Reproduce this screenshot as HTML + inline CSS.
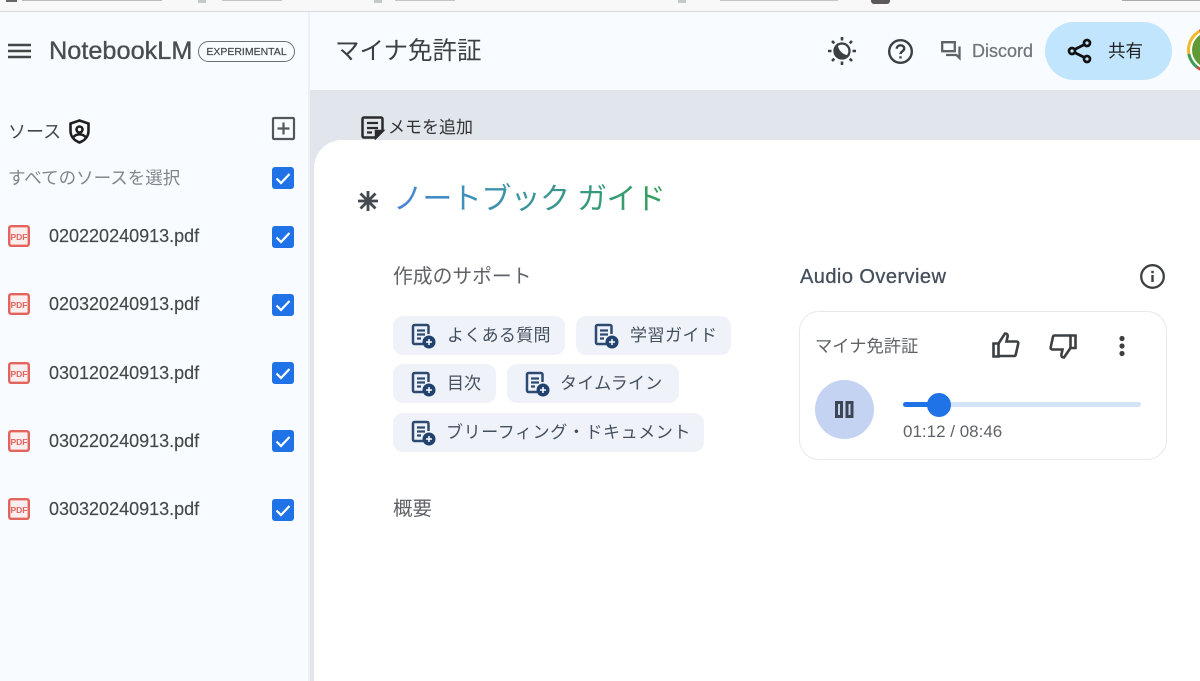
<!DOCTYPE html>
<html lang="ja">
<head>
<meta charset="utf-8">
<style>
html,body{margin:0;padding:0;width:1200px;height:681px;overflow:hidden}
body{position:relative;background:#f8fbff;font-family:"Liberation Sans","Noto Sans CJK JP",sans-serif;color:#444746}
#p{position:absolute;left:0;top:0;width:1200px;height:681px;overflow:hidden;filter:blur(.35px)}
.a{position:absolute;white-space:nowrap}
svg{position:absolute;overflow:visible}
.chip{position:absolute;height:39px;border-radius:10px;background:#eff3f9;color:#444f5e;font-size:17px;line-height:40px;white-space:nowrap}
.chip span{position:absolute;top:0}
.file{font-size:18px;color:#444746;left:49px;-webkit-text-stroke:.15px #444746}
.cb{position:absolute;left:272px;width:22px;height:22px;border-radius:3px;background:#1f73e6}
.cb svg{left:0;top:0}
</style>
</head>
<body>
<div id="p">
<!-- browser strip -->
<div class="a" style="left:0;top:0;width:1200px;height:11px;background:#f9f8f8;border-bottom:1px solid #d8dadd"></div>
<div class="a" style="left:6px;top:0;width:11px;height:2px;background:#666"></div>
<div class="a" style="left:22px;top:0;width:140px;height:1px;background:#bbb"></div>
<div class="a" style="left:198px;top:0;width:8px;height:3px;background:#c2cbc6"></div>
<div class="a" style="left:222px;top:0;width:60px;height:1px;background:#c5c5c5"></div>
<div class="a" style="left:374px;top:0;width:8px;height:3px;background:#c2cbc6"></div>
<div class="a" style="left:395px;top:0;width:60px;height:1px;background:#c5c5c5"></div>
<div class="a" style="left:678px;top:0;width:8px;height:3px;background:#c2cbc6"></div>
<div class="a" style="left:720px;top:0;width:118px;height:1px;background:#c5c5c5"></div>
<div class="a" style="left:871px;top:0;width:19px;height:4px;background:#5e5a5a;border-radius:0 0 3px 3px"></div>
<div class="a" style="left:1122px;top:0;width:78px;height:1px;background:#aaa"></div>

<!-- header divider and grey zone -->
<div class="a" style="left:308px;top:12px;width:2px;height:669px;background:#eef0f3"></div>
<div class="a" style="left:310px;top:90px;width:890px;height:591px;background:#e1e5ec"></div>
<div class="a" style="left:314px;top:140px;width:900px;height:560px;background:#fff;border-radius:28px 0 0 0"></div>

<!-- sidebar header -->
<svg style="left:8px;top:43px" width="23" height="16" viewBox="0 0 23 16"><path d="M0 2h23M0 8h23M0 14h23" stroke="#444746" stroke-width="2.400"/></svg>
<div class="a" style="left:49px;top:36px;font-size:25.300px;line-height:30px;color:#4a4d50;-webkit-text-stroke:.35px #4a4d50">NotebookLM</div>
<div class="a" style="left:198px;top:41px;width:95px;height:19px;border:1px solid #6b6e72;border-radius:11px;text-align:center;font-size:10.500px;line-height:20px;color:#444746;-webkit-text-stroke:.2px #444746">EXPERIMENTAL</div>

<!-- title -->
<div class="a" style="left:335px;top:35px;font-size:24.500px;line-height:34px;color:#3c4043">マイナ免許証</div>
<!-- theme icon -->
<svg style="left:826px;top:35px" width="32" height="32" viewBox="0 0 32 32" fill="none" stroke="#3c4043" stroke-width="2.300"><circle cx="16" cy="16" r="7.500"/><path d="M10.700 10.700C11.500 16 16 20.500 21.300 21.300A7.500 7.500 0 0 1 10.700 10.700Z" fill="#3c4043"/><path d="M16 2v3.500M16 26.500V30M2 16h3.500M26.500 16H30M6 6l2.300 2.300M23.700 23.700 26 26M6 26l2.300-2.300M23.700 8.300 26 6" stroke-width="2.600"/></svg>
<!-- help -->
<svg style="left:888px;top:39px" width="25" height="25" viewBox="0 0 25 25" fill="none" stroke="#3c4043" stroke-width="2.400"><circle cx="12.500" cy="12.500" r="11.300"/><path d="M8.800 9.800c0-2.200 1.700-3.500 3.700-3.500s3.700 1.300 3.700 3.300c0 2.700-3.700 2.700-3.700 5.500"/><path d="M12.500 17.300v2.200" stroke-width="2.400"/></svg>
<!-- discord icon -->
<svg style="left:941px;top:41px" width="20" height="20" viewBox="0 0 20 20" fill="none" stroke="#5f6368" stroke-width="2.300"><path d="M1.200 1.200h12.600v9H1.200Z"/><path d="M5 14h10.500l3 3V5.500"/></svg>
<div class="a" style="left:972px;top:40px;font-size:18px;line-height:22px;color:#70757a;-webkit-text-stroke:.25px #70757a">Discord</div>
<!-- share -->
<div class="a" style="left:1045px;top:22px;width:127px;height:58px;border-radius:29px;background:#c2e5fe"></div>
<svg style="left:1067px;top:38px" width="25" height="26" viewBox="0 0 25 26" fill="none" stroke="#111" stroke-width="2.700"><circle cx="20" cy="5" r="3"/><circle cx="5" cy="13" r="3"/><circle cx="20" cy="21" r="3"/><path d="M7.500 11.500 17.500 6.500M7.500 14.500 17.500 19.500"/></svg>
<div class="a" style="left:1108px;top:40px;font-size:17.500px;line-height:22px;color:#1f1f1f">共有</div>
<!-- avatar -->
<div class="a" style="left:1187px;top:27px;width:46px;height:46px;border-radius:50%;background:conic-gradient(#d9453a 0 60%,#3e9a55 60% 72%,#f0b92e 72% 92%,#d9453a 92%)"></div>
<div class="a" style="left:1190px;top:30px;width:40px;height:40px;border-radius:50%;background:#fff"></div>
<div class="a" style="left:1192px;top:32px;width:36px;height:36px;border-radius:50%;background:#5f9a35"></div>

<!-- source section -->
<div class="a" style="left:8px;top:119px;font-size:18px;line-height:26px;color:#444746">ソース</div>
<svg style="left:69px;top:119px" width="21" height="25" viewBox="0 0 21 25" fill="none" stroke="#1f1f1f" stroke-width="2.600"><path d="M10.500 1.500 19.500 4.500V12c0 5.500-3.800 9.500-9 11.500-5.200-2-9-6-9-11.500V4.500Z"/><circle cx="10.500" cy="10.500" r="3"/><path d="M4.500 18c3-3.500 9-3.500 12 0"/></svg>
<svg style="left:272px;top:117px" width="23" height="23" viewBox="0 0 23 23" fill="none" stroke="#54575a" stroke-width="2.200"><rect x="1" y="1" width="21" height="21" rx="1"/><path d="M11.500 5.500v12M5.500 11.500h12"/></svg>
<div class="a" style="left:8px;top:167px;font-size:17.500px;line-height:22px;color:#80868b">すべてのソースを選択</div>
<div class="cb" style="top:167px"><svg width="22" height="22" viewBox="0 0 22 22" fill="none"><path d="M4.500 11.500 9 16 17.500 7" stroke="#fff" stroke-width="2.200"/></svg></div>

<!-- defs -->
<svg width="0" height="0" style="position:absolute"><defs>
<g id="pdf"><rect x="1.200" y="1.200" width="19.600" height="19.600" rx="2" fill="#fbeeee" stroke="#e2645c" stroke-width="2.400"/></g>
<g id="chk"><path d="M4.500 11.500 9 16 17.500 7" stroke="#fff" stroke-width="2.200" fill="none"/></g>
<g id="doc"><path d="M12 21H3.500A1.500 1.500 0 0 1 2 19.500V3.500A1.500 1.500 0 0 1 3.500 2H16a1.500 1.500 0 0 1 1.500 1.500V11" fill="none" stroke="#2d4a73" stroke-width="2.500"/><path d="M6 7.500h8M6 11.500h8M6 15.500h4" stroke="#2d4a73" stroke-width="2.200"/><circle cx="18" cy="19" r="6.500" fill="#22426e"/><path d="M18 16v6M15 19h6" stroke="#fff" stroke-width="1.500"/></g>
</defs></svg>

<!-- files -->
<svg style="left:8px;top:225px" width="22" height="22" viewBox="0 0 22 22"><use href="#pdf"/><text x="11" y="15" font-family="Liberation Sans" font-size="8.500" font-weight="700" fill="#e2645c" text-anchor="middle">PDF</text></svg>
<div class="a file" style="top:225px;line-height:22px">020220240913.pdf</div>
<div class="cb" style="top:226px"><svg width="22" height="22" viewBox="0 0 22 22"><use href="#chk"/></svg></div>

<svg style="left:8px;top:293px" width="22" height="22" viewBox="0 0 22 22"><use href="#pdf"/><text x="11" y="15" font-family="Liberation Sans" font-size="8.500" font-weight="700" fill="#e2645c" text-anchor="middle">PDF</text></svg>
<div class="a file" style="top:293px;line-height:22px">020320240913.pdf</div>
<div class="cb" style="top:294px"><svg width="22" height="22" viewBox="0 0 22 22"><use href="#chk"/></svg></div>

<svg style="left:8px;top:362px" width="22" height="22" viewBox="0 0 22 22"><use href="#pdf"/><text x="11" y="15" font-family="Liberation Sans" font-size="8.500" font-weight="700" fill="#e2645c" text-anchor="middle">PDF</text></svg>
<div class="a file" style="top:362px;line-height:22px">030120240913.pdf</div>
<div class="cb" style="top:362px"><svg width="22" height="22" viewBox="0 0 22 22"><use href="#chk"/></svg></div>

<svg style="left:8px;top:430px" width="22" height="22" viewBox="0 0 22 22"><use href="#pdf"/><text x="11" y="15" font-family="Liberation Sans" font-size="8.500" font-weight="700" fill="#e2645c" text-anchor="middle">PDF</text></svg>
<div class="a file" style="top:430px;line-height:22px">030220240913.pdf</div>
<div class="cb" style="top:430px"><svg width="22" height="22" viewBox="0 0 22 22"><use href="#chk"/></svg></div>

<svg style="left:8px;top:498px" width="22" height="22" viewBox="0 0 22 22"><use href="#pdf"/><text x="11" y="15" font-family="Liberation Sans" font-size="8.500" font-weight="700" fill="#e2645c" text-anchor="middle">PDF</text></svg>
<div class="a file" style="top:498px;line-height:22px">030320240913.pdf</div>
<div class="cb" style="top:499px"><svg width="22" height="22" viewBox="0 0 22 22"><use href="#chk"/></svg></div>

<!-- add memo -->
<svg style="left:361px;top:116px" width="24" height="24" viewBox="0 0 24 24" fill="none" stroke="#2b2b2b" stroke-width="2.500"><path d="M15 21.500H3A1.500 1.500 0 0 1 1.500 20V3A1.500 1.500 0 0 1 3 1.500h17A1.500 1.500 0 0 1 21.500 3v12Z"/><path d="M6 7h11M6 12h11" stroke-width="2.200"/><path d="M6 16.500h5" stroke-width="2.200"/><path d="M15 21.500V15h6.500Z" fill="#2b2b2b"/></svg>
<div class="a" style="left:388px;top:117px;font-size:17px;line-height:22px;color:#333">メモを追加</div>

<!-- guide title -->
<svg style="left:357px;top:190px" width="22" height="22" viewBox="0 0 22 22" stroke="#444a50" stroke-width="2.800"><path d="M11 1v20M1 11h20M3.500 3.500l15 15M3.500 18.500l15-15"/></svg>
<div class="a" style="left:393px;top:181px;font-size:30px;line-height:38px;letter-spacing:-.6px;background:linear-gradient(90deg,#4c83d8 0%,#3f8fc0 22%,#3a9494 55%,#33a05a 100%);-webkit-background-clip:text;background-clip:text;color:transparent">ノートブック ガイド</div>

<!-- support -->
<div class="a" style="left:393px;top:265px;font-size:19.800px;line-height:24px;color:#5f6368">作成のサポート</div>

<div class="chip" style="left:393px;top:316px;width:172px"><svg style="left:18px;top:7px" width="25" height="25" viewBox="0 0 25 25"><use href="#doc"/></svg><span style="left:54px;letter-spacing:.3px">よくある質問</span></div>
<div class="chip" style="left:576px;top:316px;width:155px"><svg style="left:18px;top:7px" width="25" height="25" viewBox="0 0 25 25"><use href="#doc"/></svg><span style="left:54px;letter-spacing:.5px">学習ガイド</span></div>
<div class="chip" style="left:393px;top:364px;width:103px"><svg style="left:18px;top:7px" width="25" height="25" viewBox="0 0 25 25"><use href="#doc"/></svg><span style="left:54px">目次</span></div>
<div class="chip" style="left:507px;top:364px;width:172px"><svg style="left:18px;top:7px" width="25" height="25" viewBox="0 0 25 25"><use href="#doc"/></svg><span style="left:53px;letter-spacing:.3px">タイムライン</span></div>
<div class="chip" style="left:393px;top:413px;width:311px"><svg style="left:18px;top:7px" width="25" height="25" viewBox="0 0 25 25"><use href="#doc"/></svg><span style="left:53px;letter-spacing:.6px">ブリーフィング・ドキュメント</span></div>

<div class="a" style="left:393px;top:497px;font-size:19.500px;line-height:24px;color:#5f6368">概要</div>

<!-- audio overview -->
<div class="a" style="left:800px;top:265px;font-size:20px;line-height:24px;letter-spacing:.45px;color:#444f5c;-webkit-text-stroke:.3px #444f5c">Audio Overview</div>
<svg style="left:1140px;top:264px" width="25" height="25" viewBox="0 0 25 25" fill="none" stroke="#3c4043" stroke-width="2.300"><circle cx="12.500" cy="12.500" r="11.300"/><path d="M12.500 11v7" stroke-width="2.400"/><path d="M12.500 6.800v2.400" stroke-width="2.500"/></svg>

<div class="a" style="left:799px;top:311px;width:366px;height:147px;border:1px solid #e6e8eb;border-radius:20px;background:#fff"></div>
<div class="a" style="left:815px;top:335px;font-size:17.300px;line-height:22px;color:#5f6368">マイナ免許証</div>
<svg style="left:992px;top:332px" width="28" height="26" viewBox="0 0 28 26" fill="none" stroke="#3c4043" stroke-width="2.600"><path d="M1.500 11.500h5v13h-5Z"/><path d="M6.500 11.500 13 1.500c2.500 0 3 1.500 2.500 3.500l-1 4.500h10c1.300 0 2 1 1.700 2.300l-2.500 11c-.2.800-.8 1.200-1.700 1.200H6.500"/></svg>
<svg style="left:1050px;top:334px" width="27" height="25" viewBox="0 0 27 25" fill="none" stroke="#3c4043" stroke-width="2.600"><path d="M25.500 14h-5V1.500h5Z"/><path d="M20.500 14 14 23.500c-2.500 0-2.900-1.500-2.500-3.500l1-4.500h-10C1 15.500.4 14.500.7 13.200L3 2.700C3.200 1.900 3.800 1.500 4.700 1.500H20.500"/></svg>
<svg style="left:1118px;top:336px" width="8" height="20" viewBox="0 0 8 20" fill="#3c4043"><circle cx="4" cy="2.500" r="2.600"/><circle cx="4" cy="10" r="2.600"/><circle cx="4" cy="17.500" r="2.600"/></svg>

<div class="a" style="left:815px;top:380px;width:59px;height:59px;border-radius:50%;background:#c4d3f2"></div>
<svg style="left:835px;top:401px" width="19" height="17" viewBox="0 0 19 17" fill="none" stroke="#3c4654" stroke-width="3"><rect x="1.500" y="1.500" width="5" height="14"/><rect x="12" y="1.500" width="5" height="14"/></svg>

<div class="a" style="left:903px;top:402px;width:238px;height:5px;border-radius:3px;background:#d3e3fa"></div>
<div class="a" style="left:903px;top:402px;width:36px;height:5px;border-radius:3px;background:#1f73e6"></div>
<div class="a" style="left:927px;top:393px;width:24px;height:24px;border-radius:50%;background:#1f73e6"></div>
<div class="a" style="left:903px;top:422px;font-size:17px;line-height:20px;color:#5f6368">01:12 / 08:46</div>
</div>
</body>
</html>
